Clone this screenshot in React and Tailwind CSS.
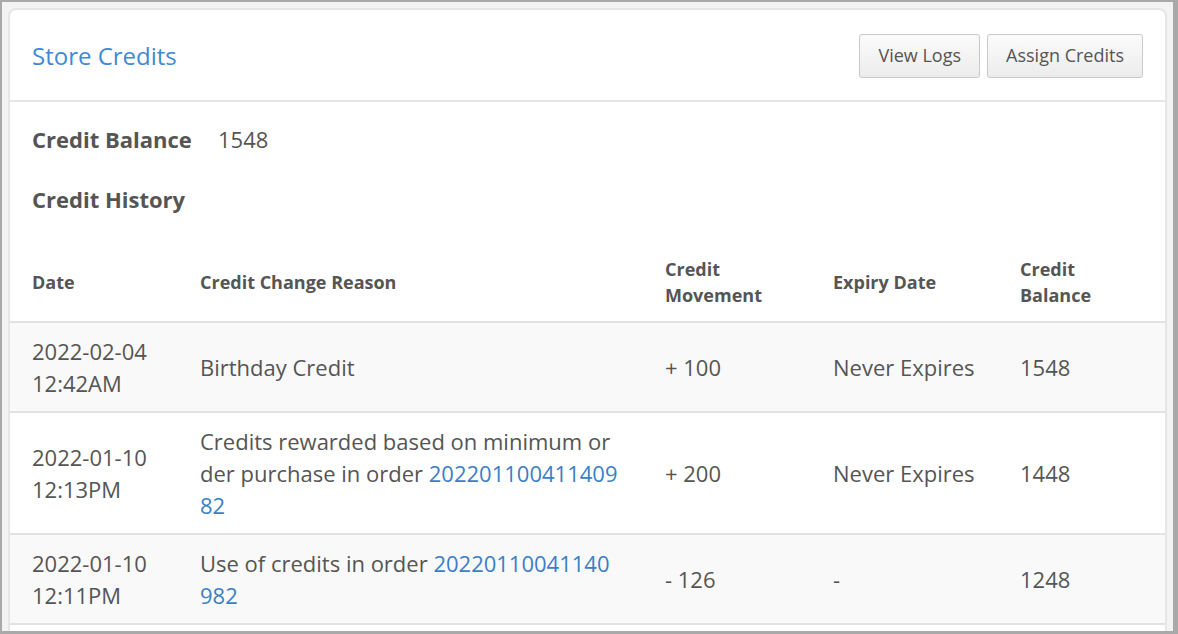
import React from "react";

const rows = [
  {
    date: "2022-02-04 12:42AM",
    reason: "Birthday Credit",
    order: null,
    movement: "+ 100",
    expiry: "Never Expires",
    balance: "1548",
  },
  {
    date: "2022-01-10 12:13PM",
    reason: "Credits rewarded based on minimum order purchase in order ",
    order: "20220110041140982",
    movement: "+ 200",
    expiry: "Never Expires",
    balance: "1448",
  },
  {
    date: "2022-01-10 12:11PM",
    reason: "Use of credits in order ",
    order: "20220110041140982",
    movement: "- 126",
    expiry: "-",
    balance: "1248",
  },
];

const Button = ({ children }) => (
  <button className="h-[44px] px-[18px] rounded-[3px] border border-[#c9c9c9] bg-gradient-to-b from-[#fbfbfb] to-[#ececec] text-[18px] text-[#555]">
    {children}
  </button>
);

export default function App() {
  return (
    <div
      className="w-[1178px] h-[634px] overflow-hidden bg-[#f3f3f3] border-l-2 border-t-2 border-r-[5px] border-b-[3px] border-[#a9a9a9] pl-[6px] pt-[6px] pr-[6px] text-[#555]"
      style={{ fontFamily: '"Open Sans", "Noto Sans", sans-serif' }}
    >
      <div className="bg-white border-2 border-[#e6e6e6] rounded-t-[8px] min-h-[700px]">
        {/* header */}
        <div className="h-[92px] flex items-center justify-between pl-[22px] pr-[22px] pt-[1px] border-b-2 border-[#e6e6e6]">
          <h1 className="text-[24px] text-[#3e8ad6]">Store Credits</h1>
          <div className="flex gap-[7px]">
            <Button>View Logs</Button>
            <Button>Assign Credits</Button>
          </div>
        </div>

        {/* body */}
        <div className="pt-[21px]">
          <div className="px-[22px] flex items-center text-[22px] leading-[32px]">
            <span className="font-bold w-[186px]">Credit Balance</span>
            <span>1548</span>
          </div>
          <div className="px-[22px] mt-[28px] text-[22px] leading-[32px] font-bold">
            Credit History
          </div>

          <table className="mt-[28px] w-full table-fixed border-collapse">
            <colgroup>
              <col className="w-[190px]" />
              <col className="w-[465px]" />
              <col className="w-[168px]" />
              <col className="w-[187px]" />
              <col />
            </colgroup>
            <thead>
              <tr className="border-b-2 border-[#e2e2e2] text-left text-[18px] leading-[26px] font-bold">
                <th className="pl-[22px] pr-[22px] py-[13px] align-middle">Date</th>
                <th className="pr-[46px] py-[13px] align-middle">Credit Change Reason</th>
                <th className="pr-[22px] py-[13px] align-middle">Credit Movement</th>
                <th className="pr-[22px] py-[13px] align-middle">Expiry Date</th>
                <th className="pr-[22px] py-[13px] align-middle">Credit Balance</th>
              </tr>
            </thead>
            <tbody className="text-[22px] leading-[32px]">
              {rows.map((r, i) => (
                <tr
                  key={i}
                  className={`border-b-2 border-[#e2e2e2] ${i % 2 === 0 ? "bg-[#f9f9f9]" : "bg-white"}`}
                >
                  <td className="pl-[22px] pr-[22px] py-[12px] align-middle">{r.date}</td>
                  <td className="pr-[46px] py-[12px] align-middle break-all">
                    {r.reason}
                    {r.order && <span className="text-[#3b7fc6]">{r.order}</span>}
                  </td>
                  <td className="pr-[22px] py-[12px] align-middle">{r.movement}</td>
                  <td className="pr-[22px] py-[12px] align-middle">{r.expiry}</td>
                  <td className="pr-[22px] py-[12px] align-middle">{r.balance}</td>
                </tr>
              ))}
              <tr className="bg-white">
                <td className="h-[60px]" colSpan={5}></td>
              </tr>
            </tbody>
          </table>
        </div>
      </div>
    </div>
  );
}
